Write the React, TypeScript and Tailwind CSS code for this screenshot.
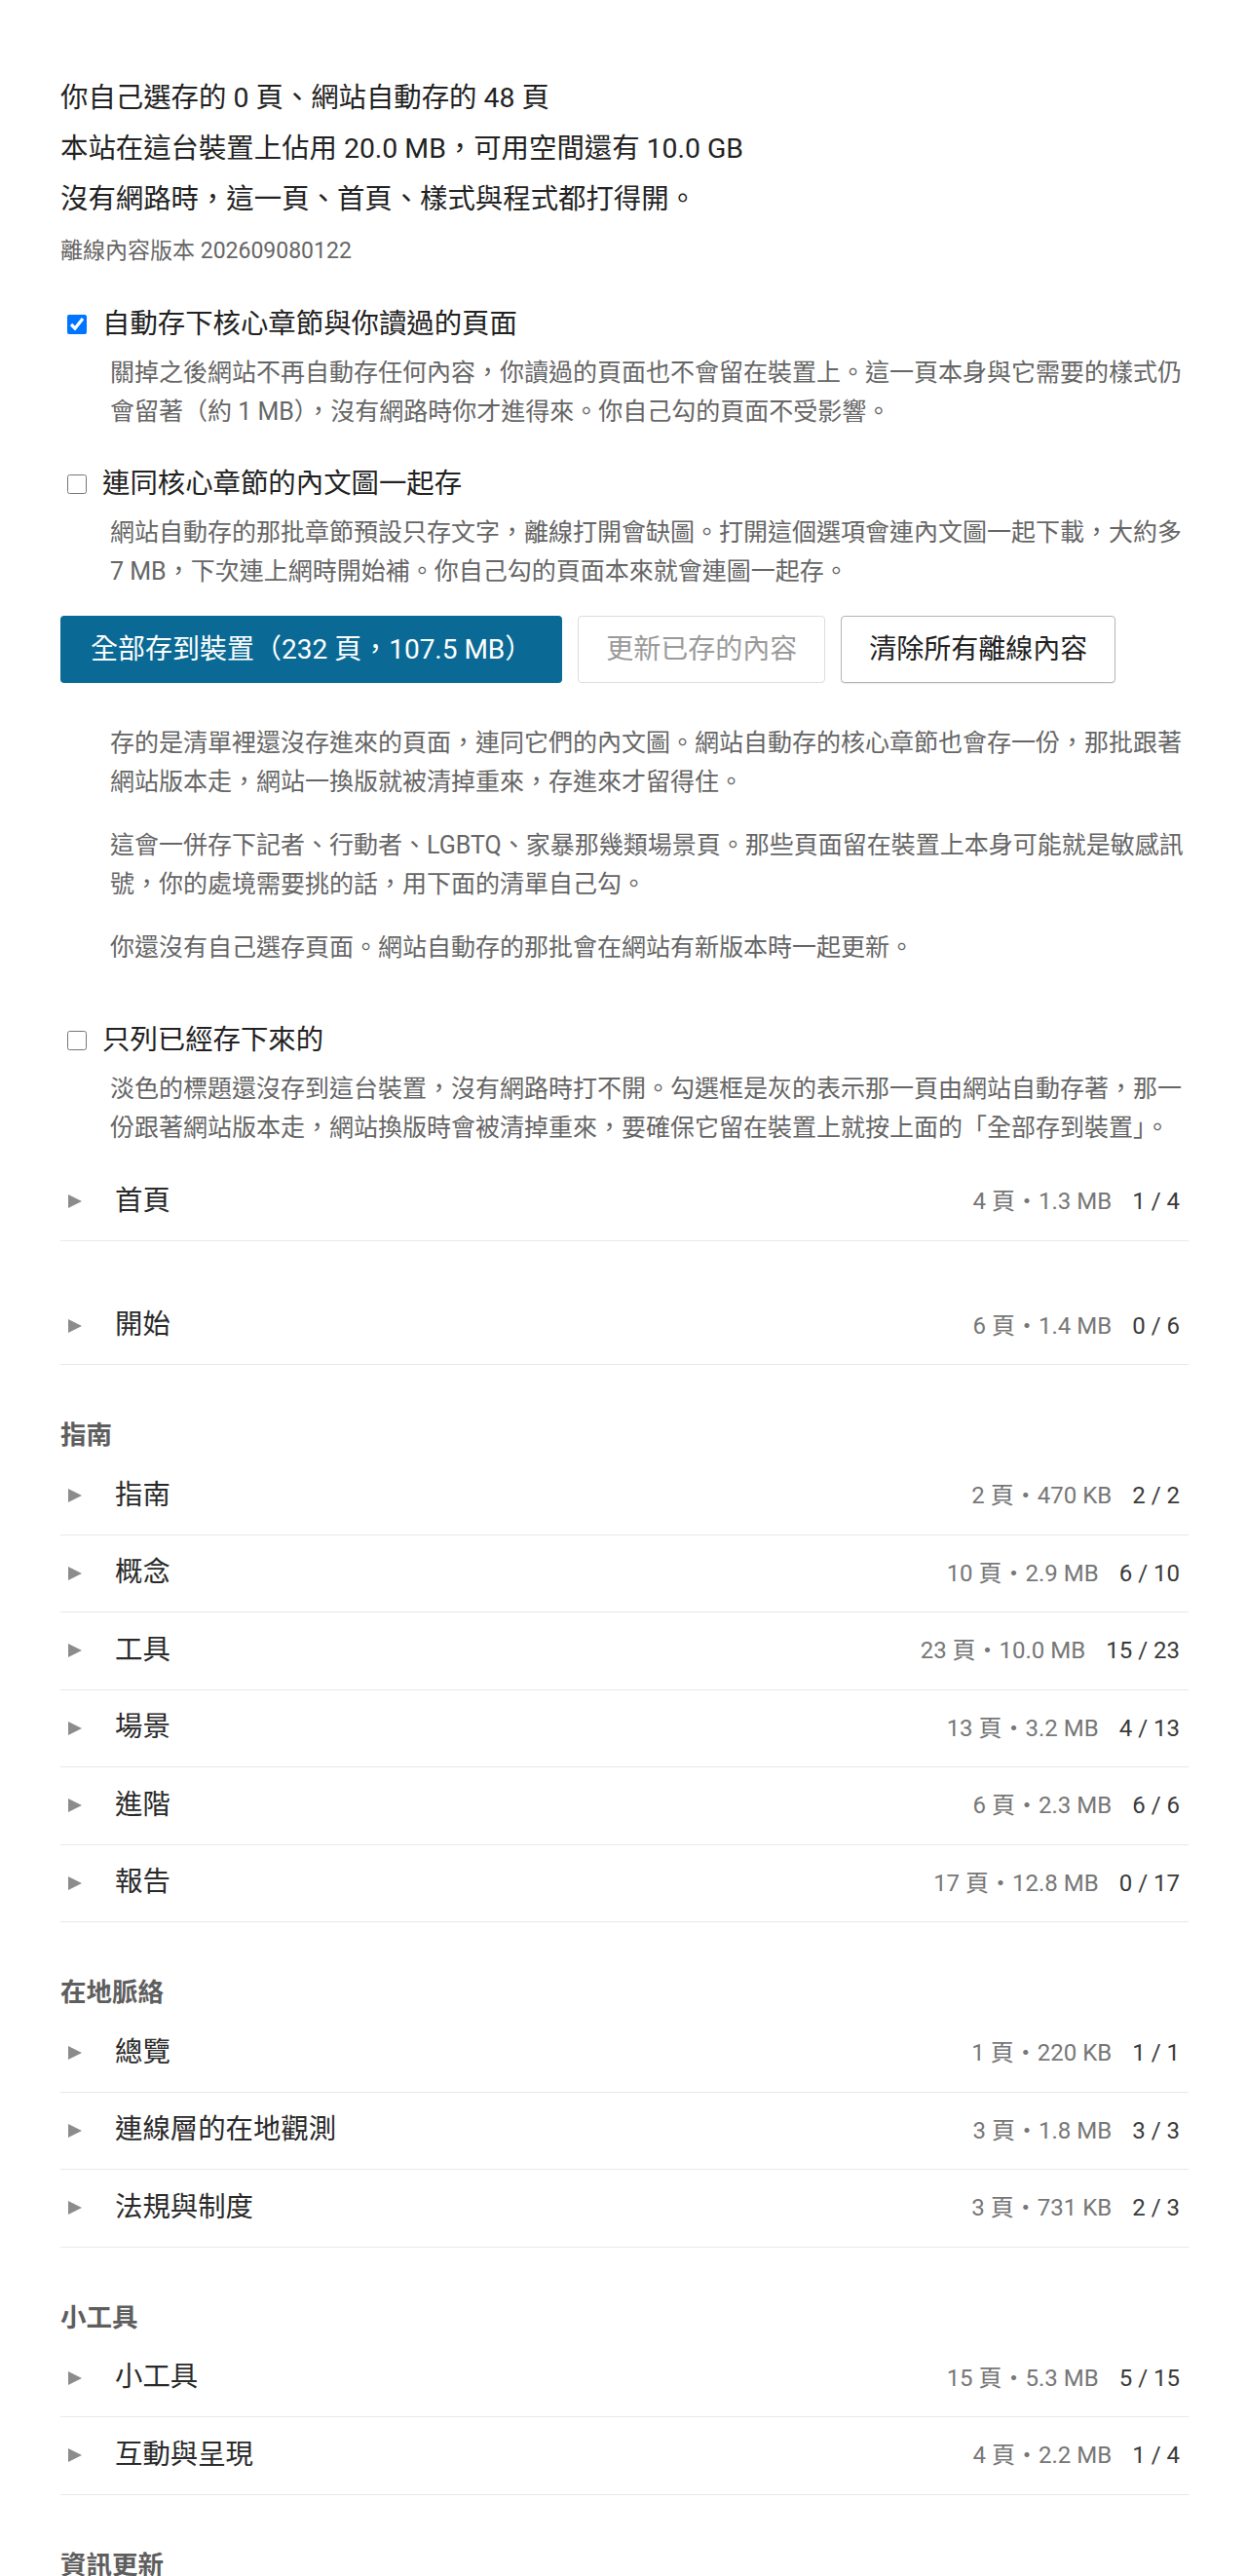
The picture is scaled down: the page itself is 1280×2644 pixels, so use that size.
import React from "react";

type Row = [string, string, string];
type Section = { title: string | null; rows: Row[] };

const sections: Section[] = [
  { title: null, rows: [["首頁", "4 頁・1.3 MB", "1 / 4"]] },
  { title: null, rows: [["開始", "6 頁・1.4 MB", "0 / 6"]] },
  {
    title: "指南",
    rows: [
      ["指南", "2 頁・470 KB", "2 / 2"],
      ["概念", "10 頁・2.9 MB", "6 / 10"],
      ["工具", "23 頁・10.0 MB", "15 / 23"],
      ["場景", "13 頁・3.2 MB", "4 / 13"],
      ["進階", "6 頁・2.3 MB", "6 / 6"],
      ["報告", "17 頁・12.8 MB", "0 / 17"],
    ],
  },
  {
    title: "在地脈絡",
    rows: [
      ["總覽", "1 頁・220 KB", "1 / 1"],
      ["連線層的在地觀測", "3 頁・1.8 MB", "3 / 3"],
      ["法規與制度", "3 頁・731 KB", "2 / 3"],
    ],
  },
  {
    title: "小工具",
    rows: [
      ["小工具", "15 頁・5.3 MB", "5 / 15"],
      ["互動與呈現", "4 頁・2.2 MB", "1 / 4"],
    ],
  },
  { title: "資訊更新", rows: [] },
];

function Check({ checked, label }: { checked: boolean; label: string }) {
  return (
    <label className="flex items-center h-[44px] leading-[44px] text-[28.4px] text-[#222]">
      <input
        type="checkbox"
        checked={checked}
        readOnly
        className="m-0 ml-[7px] mr-[16px] w-[20px] h-[20px] shrink-0"
      />
      <span>{label}</span>
    </label>
  );
}

function Desc({ children }: { children: React.ReactNode }) {
  return (
    <p className="ml-[51px] mt-[8px] text-[25px] leading-[40px] text-[#666]">
      {children}
    </p>
  );
}

function Triangle() {
  return (
    <svg width="14" height="14" viewBox="0 0 14 14" className="shrink-0">
      <polygon points="0,0 14,7 0,14" fill="#8c8c8c" />
    </svg>
  );
}

export default function App() {
  return (
    <div className="h-[2644px] overflow-hidden bg-white">
      <div className="pl-[62px] pr-[60px] pt-[75px] text-[#222] font-['Roboto','Noto_Sans_CJK_TC',sans-serif]">
        <p className="text-[28.4px] leading-[52px]">你自己選存的 0 頁、網站自動存的 48 頁</p>
        <p className="text-[28.4px] leading-[52px]">本站在這台裝置上佔用 20.0 MB，可用空間還有 10.0 GB</p>
        <p className="text-[28.4px] leading-[52px]">沒有網路時，這一頁、首頁、樣式與程式都打得開。</p>
        <p className="mt-[7px] text-[23px] leading-[40px] text-[#666]">離線內容版本 202609080122</p>

        <div className="mt-[33px]">
          <Check checked label="自動存下核心章節與你讀過的頁面" />
          <Desc>
            關掉之後網站不再自動存任何內容，你讀過的頁面也不會留在裝置上。這一頁本身與它需要的樣式仍會留著（約 1 MB），沒有網路時你才進得來。你自己勾的頁面不受影響。
          </Desc>
        </div>

        <div className="mt-[32px]">
          <Check checked={false} label="連同核心章節的內文圖一起存" />
          <Desc>
            網站自動存的那批章節預設只存文字，離線打開會缺圖。打開這個選項會連內文圖一起下載，大約多 7 MB，下次連上網時開始補。你自己勾的頁面本來就會連圖一起存。
          </Desc>
        </div>

        <div className="mt-[25px] flex gap-[16px]">
          <button className="h-[69px] px-[31px] rounded-[4px] bg-[#0a6a95] text-white text-[28px] whitespace-nowrap">
            全部存到裝置（232 頁，107.5 MB）
          </button>
          <button
            disabled
            className="h-[69px] px-[28px] rounded-[4px] border border-[#dddddd] bg-white text-[#9a9a9a] text-[28px] whitespace-nowrap"
          >
            更新已存的內容
          </button>
          <button className="h-[69px] px-[28px] rounded-[4px] border border-[#b5b5b5] bg-white text-[#222] text-[28px] whitespace-nowrap shadow-[0_1px_1px_rgba(0,0,0,0.08)]">
            清除所有離線內容
          </button>
        </div>

        <div className="ml-[51px] mt-[42px] flex flex-col gap-[25px] text-[25px] leading-[40px] text-[#666]">
          <p>
            存的是清單裡還沒存進來的頁面，連同它們的內文圖。網站自動存的核心章節也會存一份，那批跟著網站版本走，網站一換版就被清掉重來，存進來才留得住。
          </p>
          <p>
            這會一併存下記者、行動者、LGBTQ、家暴那幾類場景頁。那些頁面留在裝置上本身可能就是敏感訊號，你的處境需要挑的話，用下面的清單自己勾。
          </p>
          <p>你還沒有自己選存頁面。網站自動存的那批會在網站有新版本時一起更新。</p>
        </div>

        <div className="mt-[53px]">
          <Check checked={false} label="只列已經存下來的" />
          <Desc>
            淡色的標題還沒存到這台裝置，沒有網路時打不開。勾選框是灰的表示那一頁由網站自動存著，那一份跟著網站版本走，網站換版時會被清掉重來，要確保它留在裝置上就按上面的「全部存到裝置」。
          </Desc>
        </div>

        <div className="mt-[16px]">
          {sections.map((s, i) => (
            <section key={i} className={i === 0 ? "" : "mt-[48px]"}>
              {s.title && (
                <h3 className="h-[47px] leading-[47px] text-[26.5px] font-bold text-[#5e5e5e]">
                  {s.title}
                </h3>
              )}
              <ul>
                {s.rows.map((r) => (
                  <li
                    key={r[0]}
                    className="flex items-center h-[79.5px] border-b border-[#e8e8e8]"
                  >
                    <span className="ml-[8px] flex items-center">
                      <Triangle />
                    </span>
                    <span className="ml-[34px] text-[28.4px] text-[#2a2a2a]">{r[0]}</span>
                    <span className="ml-auto text-[24px] text-[#777]">{r[1]}</span>
                    <span className="ml-[21px] mr-[9px] text-[24px] text-[#3a3a3a]">{r[2]}</span>
                  </li>
                ))}
              </ul>
            </section>
          ))}
        </div>
      </div>
    </div>
  );
}
